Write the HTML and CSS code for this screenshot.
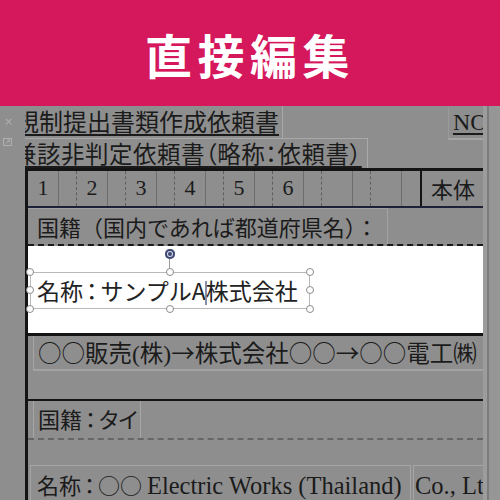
FILE: index.html
```html
<!DOCTYPE html>
<html lang="ja">
<head>
<meta charset="UTF-8" />
<title>直接編集</title>
<link rel="stylesheet" href="styles.css">
</head>
<body>
  <header class="banner">
    <h1>直接編集</h1>
  </header>

  <main class="workspace">
    <aside class="gutter">
      <span class="close">×</span>
      <svg class="pop" width="9" height="8" viewBox="0 0 9 8" aria-hidden="true">
        <rect x="0.5" y="0.5" width="8" height="7" fill="none" stroke="#b0b0b0" />
        <path d="M3 5.5 L6.5 2 M4.5 2 H6.5 V4" fill="none" stroke="#b0b0b0" />
      </svg>
    </aside>

    <section class="sheet">
      <div class="heading-row">
        <div class="doc-title"><span class="clip">規制提出書類作成依頼書</span></div>
        <div class="doc-no">NO</div>
      </div>
      <div class="doc-subtitle"><span class="clip">兼該非判定依頼書（略称：依頼書）</span></div>

      <div class="form">
        <div class="num-row">
          <div class="num">1</div><div class="gap"></div>
          <div class="num">2</div><div class="gap"></div>
          <div class="num">3</div><div class="gap"></div>
          <div class="num">4</div><div class="gap"></div>
          <div class="num">5</div><div class="gap"></div>
          <div class="num">6</div><div class="gap"></div>
          <div class="num"></div><div class="gap"></div>
          <div class="num"></div><div class="gap last"></div>
          <div class="body-cell">本体</div>
        </div>

        <div class="field-row">
          <div class="label-cell">国籍（国内であれば都道府県名）：</div>
        </div>

        <div class="edit-area">
          <div class="text-box">
            名称<span class="p">：</span>サンプルA<i class="caret"></i>株式会社
            <span class="rotate"></span>
            <span class="handle tl"></span><span class="handle tc"></span><span class="handle tr"></span>
            <span class="handle ml"></span><span class="handle mr"></span>
            <span class="handle bl"></span><span class="handle bc"></span><span class="handle br"></span>
          </div>
        </div>

        <div class="history">
          <div class="history-cell">○○販売<span class="narrow">(</span>株<span class="narrow">)</span>→株式会社○○→○○電工㈱</div>
        </div>

        <div class="nation">
          <div class="nation-cell">国籍<span class="p">：</span><span class="kana">タイ</span></div>
        </div>

        <div class="name-row">
          <div class="name-cell">名称<span class="p">：</span>○○ <span class="latin">Electric Works (Thailand)</span></div>
          <div class="name-cell rest"><span class="latin">Co., Ltd.</span></div>
        </div>
      </div>
    </section>

    <div class="scrollbar"></div>
  </main>
</body>
</html>
```

FILE: styles.css
```css
* {
  box-sizing: border-box;
}
html, body {
  margin: 0;
  padding: 0;
  width: 500px;
  height: 500px;
  overflow: hidden;
  font-family: "Noto Sans CJK JP", "Liberation Sans", sans-serif;
  color: #1b1b1b;
}

/* Pink title band */
.banner {
  height: 106px;
  background: #d5175b;
  display: flex;
  justify-content: center;
  align-items: center;
}
.banner h1 {
  margin: 0;
  color: #fff;
  font-size: 47px;
  font-weight: 700;
  letter-spacing: 5.5px;
  line-height: 1;
}

/* Grey document workspace */
.workspace {
  display: flex;
  height: 394px;
  background: #8e8e8e;
}
.gutter {
  width: 25px;
  flex-shrink: 0;
  display: flex;
  flex-direction: column;
  padding: 10px 0 0 3px;
  gap: 10px;
}
.gutter .close {
  color: #b0b0b0;
  font-family: "DejaVu Sans", sans-serif;
  font-size: 11px;
  line-height: 12px;
  padding-left: 1px;
}
.sheet {
  flex: 1;
  overflow: hidden;
}
.scrollbar {
  width: 17px;
  flex-shrink: 0;
  background: #969696;
  border-left: 4px solid #9c9c9c;
  box-shadow: inset 2px 0 0 #7c7c7c;
}

/* punctuation set tight, like a proportional gothic */
.p {
  font-feature-settings: "palt";
  padding: 0 3px;
}
.kana {
  font-feature-settings: "palt";
}

/* Document headings */
.heading-row {
  display: flex;
  height: 32px;
}
.doc-title,
.doc-subtitle {
  overflow: hidden;
  white-space: nowrap;
  line-height: 30px;
}
.doc-title {
  width: 258px;
  border-right: 1px solid #a9a9a9;
  font-size: 24px;
}
.doc-subtitle {
  width: 343px;
  height: 30px;
  border-top: 1px solid #a9a9a9;
  border-right: 1px solid #a9a9a9;
  font-size: 23.5px;
  line-height: 28px;
  letter-spacing: 0.5px;
  font-feature-settings: "palt";
}
.clip {
  display: inline-block;
  margin-left: -10px;
  text-decoration: underline;
  text-underline-offset: 3px;
}
.doc-subtitle .clip {
  margin-left: -12px;
}
.doc-no {
  margin-left: auto;
  margin-top: 1px;
  width: 35px;
  height: 33px;
  padding-left: 4px;
  border-left: 1px solid #9a9a9a;
  border-bottom: 2px solid #a4a4a4;
  overflow: hidden;
  white-space: nowrap;
  font-family: "Liberation Serif", serif;
  font-size: 24px;
  line-height: 30px;
  text-decoration: underline;
  text-underline-offset: 3px;
}

/* Form table */
.form {
  border-top: 3px solid #141414;
  border-left: 3px solid #141414;
}
.num-row {
  display: grid;
  grid-template-columns: repeat(8, 31px 18px) 1fr;
  height: 37px;
  border-bottom: 2px solid #1d2238;
  font-family: "Liberation Serif", serif;
  font-size: 22px;
}
.num {
  border-right: 1px solid #6d6d6d;
  text-align: center;
  line-height: 34px;
}
.gap {
  border-right: 1px dashed #5e5e5e;
}
.gap.last {
  border-right: none;
}
.body-cell {
  border-left: 2px solid #141414;
  padding-left: 9px;
  font-family: "Noto Sans CJK JP", sans-serif;
  line-height: 34px;
  white-space: nowrap;
}

.field-row {
  display: flex;
  height: 38px;
  border-bottom: 2px dashed #1a1a1a;
}
.label-cell {
  width: 360px;
  padding-left: 9px;
  border-top: 1px solid #a0a0a0;
  border-right: 1px solid #a4a4a4;
  font-size: 22px;
  line-height: 34px;
  white-space: nowrap;
  overflow: hidden;
}

.edit-area {
  height: 90px;
  background: #fff;
  border-bottom: 3px solid #141414;
  padding: 26px 0 0 2px;
}
.text-box {
  position: relative;
  width: 280px;
  height: 37px;
  border: 1px solid #b9b9b9;
  padding-left: 6px;
  font-size: 23px;
  line-height: 34px;
  white-space: nowrap;
  color: #222;
}
.caret {
  display: inline-block;
  width: 2px;
  height: 24px;
  margin: 0 -1px;
  vertical-align: -5px;
  background: #8a8fa8;
}
.handle {
  position: absolute;
  width: 8px;
  height: 8px;
  border-radius: 50%;
  background: #fff;
  border: 1px solid #8c8c8c;
}
.tl { left: -5px; top: -5px; }
.tc { left: 135px; top: -5px; }
.tr { right: -5px; top: -5px; }
.ml { left: -5px; top: 13px; }
.mr { right: -5px; top: 13px; }
.bl { left: -5px; bottom: -5px; }
.bc { left: 135px; bottom: -5px; }
.br { right: -5px; bottom: -5px; }
.rotate {
  position: absolute;
  left: 134px;
  top: -24px;
  width: 10px;
  height: 10px;
  border-radius: 50%;
  background: #3d4873;
  box-shadow: inset 0 0 0 2px #3d4873, inset 0 0 0 3px #d8dbe8;
}
.rotate::after {
  content: '';
  position: absolute;
  left: 4px;
  top: 10px;
  width: 1px;
  height: 9px;
  background: #9a9a9a;
}

.history {
  height: 65px;
  border-bottom: 2px solid #141414;
  padding-left: 5px;
}
.history-cell {
  height: 35px;
  border-left: 1px solid #a6a6a6;
  border-bottom: 2px solid #a2a2a2;
  padding-left: 4px;
  font-size: 23.5px;
  line-height: 33px;
  white-space: nowrap;
  overflow: hidden;
}
.narrow {
  font-family: "Liberation Serif", serif;
}

.nation {
  height: 39px;
  border-bottom: 2px dashed #666;
  padding-left: 5px;
}
.nation-cell {
  width: 108px;
  height: 37px;
  border-left: 1px solid #a6a6a6;
  border-right: 1px solid #a6a6a6;
  padding-left: 4px;
  font-size: 22px;
  line-height: 34px;
  white-space: nowrap;
}

.name-row {
  display: flex;
  margin-top: 25px;
  padding-left: 2px;
}
.name-cell {
  width: 381px;
  height: 40px;
  flex-shrink: 0;
  border-top: 1px solid #a6a6a6;
  border-left: 1px solid #a6a6a6;
  border-right: 1px solid #a6a6a6;
  padding-left: 6px;
  font-size: 22px;
  line-height: 36px;
  white-space: nowrap;
  overflow: hidden;
}
.name-cell.rest {
  width: 80px;
  margin-left: 2px;
  padding-left: 1px;
}
.latin {
  font-family: "Liberation Serif", serif;
  font-size: 24.5px;
}
```
